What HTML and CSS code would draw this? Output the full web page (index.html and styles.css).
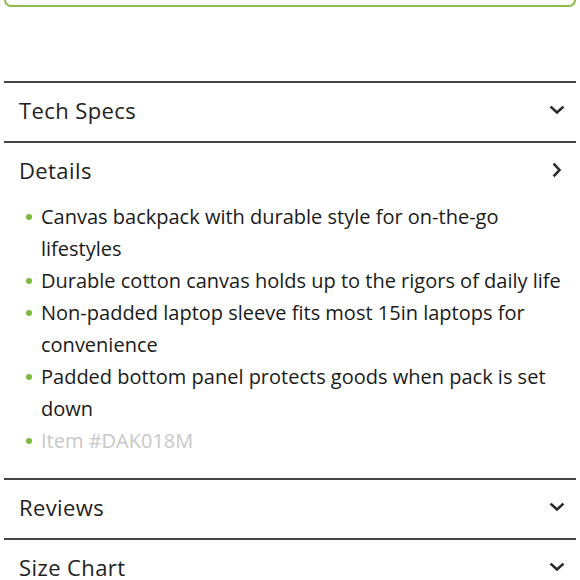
FILE: index.html
```html
<!DOCTYPE html>
<html>
<head>
<meta charset="utf-8">
<link rel="stylesheet" href="styles.css">
</head>
<body>
<div class="promo-box"></div>
<div class="accordion">
  <div class="section">
    <div class="header">
      <span class="title">Tech Specs</span>
      <svg class="chev" width="16" height="16" viewBox="0 0 16 16"><path d="M2.5 5.5 L8 10.5 L13.5 5.5" fill="none" stroke="#2a2a2a" stroke-width="2.6" stroke-linecap="square"/></svg>
    </div>
  </div>
  <div class="section">
    <div class="header">
      <span class="title">Details</span>
      <svg class="chev" width="16" height="16" viewBox="0 0 16 16"><path d="M5.5 2.5 L10.5 8 L5.5 13.5" fill="none" stroke="#2a2a2a" stroke-width="2.6" stroke-linecap="square"/></svg>
    </div>
    <ul class="details">
      <li>Canvas backpack with durable style for on-the-go lifestyles</li>
      <li>Durable cotton canvas holds up to the rigors of daily life</li>
      <li>Non-padded laptop sleeve fits most 15in laptops for convenience</li>
      <li>Padded bottom panel protects goods when pack is set down</li>
      <li class="muted">Item #DAK018M</li>
    </ul>
  </div>
  <div class="section">
    <div class="header">
      <span class="title">Reviews</span>
      <svg class="chev" width="16" height="16" viewBox="0 0 16 16"><path d="M2.5 5.5 L8 10.5 L13.5 5.5" fill="none" stroke="#2a2a2a" stroke-width="2.6" stroke-linecap="square"/></svg>
    </div>
  </div>
  <div class="section">
    <div class="header">
      <span class="title">Size Chart</span>
      <svg class="chev" width="16" height="16" viewBox="0 0 16 16"><path d="M2.5 5.5 L8 10.5 L13.5 5.5" fill="none" stroke="#2a2a2a" stroke-width="2.6" stroke-linecap="square"/></svg>
    </div>
  </div>
</div>
</body>
</html>
```
FILE: styles.css
```css
html, body {
  margin: 0;
  padding: 0;
  background: #fff;
}
body {
  font-family: "Open Sans", "Noto Sans", sans-serif;
  color: #1a1a1a;
  width: 580px;
  overflow: hidden;
}
.promo-box {
  height: 5px;
  margin: 0 4px;
  border: 2px solid #8dbb4c;
  border-top: none;
  border-radius: 0 0 8px 8px;
}
.accordion {
  margin: 74px 4px 0;
}
.section {
  border-top: 2px solid #444;
}
.header {
  box-sizing: border-box;
  height: 58px;
  display: flex;
  align-items: center;
  justify-content: space-between;
  padding: 0 11px 4px 15px;
}
.title {
  font-size: 22px;
  font-weight: 400;
  letter-spacing: 0.4px;
  color: #222;
}
.chev {
  display: block;
}
.details {
  list-style: none;
  margin: 0;
  padding: 0 4px 21px 37px;
}
.details li {
  position: relative;
  font-size: 20px;
  line-height: 32px;
}
.details li::before {
  content: "";
  position: absolute;
  left: -15px;
  top: 13px;
  width: 6px;
  height: 6px;
  border-radius: 50%;
  background: #7fb541;
}
.details li.muted {
  color: #c8c8c8;
}
```
